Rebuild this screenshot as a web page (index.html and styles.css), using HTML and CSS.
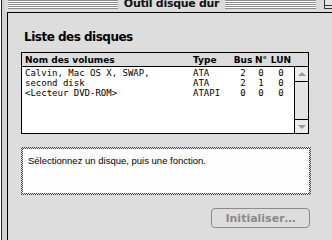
FILE: index.html
```html
<!DOCTYPE html>
<html lang="fr">
  <head>
    <meta charset="UTF-8" />
    <title>Outil disque dur</title>
    <link rel="stylesheet" href="styles.css">
  </head>
  <body>
    <div class="window">
      <div class="titlebar">
        <span class="stripes"></span>
        <span class="title">Outil disque dur</span>
        <span class="title-right">
          <span class="stripes"></span>
          <span class="shade-box"></span>
        </span>
      </div>
      <div class="content">
        <h1>Liste des disques</h1>

        <div class="listbox">
          <div class="list-head">
            <span class="col-name">Nom des volumes</span>
            <span class="col-type">Type</span>
            <span class="col-num">Bus</span>
            <span class="col-num">N°</span>
            <span class="col-num">LUN</span>
          </div>
          <div class="list-body">
            <ul class="rows">
              <li class="row">
                <span class="col-name">Calvin, Mac OS X, SWAP,</span>
                <span class="col-type">ATA</span>
                <span class="col-num">2</span>
                <span class="col-num">0</span>
                <span class="col-num">0</span>
              </li>
              <li class="row">
                <span class="col-name">second disk</span>
                <span class="col-type">ATA</span>
                <span class="col-num">2</span>
                <span class="col-num">1</span>
                <span class="col-num">0</span>
              </li>
              <li class="row">
                <span class="col-name">&lt;Lecteur DVD-ROM&gt;</span>
                <span class="col-type">ATAPI</span>
                <span class="col-num">0</span>
                <span class="col-num">0</span>
                <span class="col-num">0</span>
              </li>
            </ul>
            <div class="scrollbar">
              <div class="arrow-box up"><span class="arrow"></span></div>
              <div class="track"></div>
              <div class="arrow-box down"><span class="arrow"></span></div>
            </div>
          </div>
        </div>

        <div class="info">
          <div class="info-inner">Sélectionnez un disque, puis une fonction.</div>
        </div>

        <div class="actions">
          <button class="btn" disabled>Initialiser…</button>
        </div>
      </div>
    </div>
  </body>
</html>
```

FILE: styles.css
```css
html,
body {
  margin: 0;
  padding: 0;
  background: #ffffff;
  overflow: hidden;
}

body {
  font-family: "DejaVu Sans", sans-serif;
  color: #000;
}

.window {
  width: 328px;
  height: 249px;
  margin: -10px 0 0 1px;
  border: 1px solid #222;
  border-bottom: none;
  background: #d2d2d2;
  padding: 0 6px 0 5px;
}

/* title bar */
.titlebar {
  display: grid;
  grid-template-columns: 1fr auto 1fr;
  align-items: end;
  height: 21px;
  margin: 0 -6px 0 -2px;
  padding: 0 6px 3px 3px;
  box-sizing: border-box;
  background: #dcdcdc;
}

.stripes {
  display: block;
  height: 12px;
  background: repeating-linear-gradient(
    to bottom,
    #ffffff 0 1px,
    #8c8c8c 1px 2px
  );
}

.title {
  margin: 0 6px -2px;
  font-size: 11px;
  font-weight: bold;
  line-height: 14px;
  letter-spacing: -0.3px;
  color: #111;
}

.title-right {
  display: flex;
  align-items: flex-end;
}

.title-right .stripes {
  flex: 1;
}

.shade-box {
  width: 9px;
  height: 9px;
  margin: 0 0 0 8px;
  border: 1px solid #333;
  background:
    linear-gradient(#333, #333) 0 6px / 100% 1px no-repeat,
    #e4e4e4;
}

/* content area */
.content {
  box-sizing: border-box;
  height: 228px;
  border: 1px solid #000;
  border-bottom: none;
  background: #dddddd;
  padding: 17px 0 0 13px;
}

h1 {
  margin: 0 0 8px 3px;
  font-size: 12px;
  line-height: 14px;
  letter-spacing: -0.5px;
  font-weight: bold;
  color: #000;
}

/* volume list */
.listbox {
  width: 286px;
  border: 1px solid #000;
  background: #fff;
}

.list-head {
  display: grid;
  grid-template-columns: 171px 39px 22px 14px 26px;
  height: 12px;
  padding-top: 1px;
  border-bottom: 1px solid #000;
  background: #dcdcdc;
  font-size: 9px;
  font-weight: bold;
  line-height: 12px;
}

.list-body {
  display: flex;
  height: 66px;
}

.rows {
  flex: 1;
  margin: 0;
  padding: 1px 0 0;
  list-style: none;
  font-family: "DejaVu Sans Mono", monospace;
  font-size: 9px;
  line-height: 10px;
}

.row {
  display: grid;
  grid-template-columns: 171px 39px 22px 14px 26px;
}

.col-name {
  padding-left: 3px;
  white-space: nowrap;
}

.col-num {
  text-align: center;
}

.scrollbar {
  display: flex;
  flex-direction: column;
  width: 13px;
  border-left: 1px solid #000;
  background: #e2e2e2;
}

.arrow-box {
  height: 14px;
  display: flex;
  align-items: center;
  justify-content: center;
  background: #ececec;
}

.arrow-box.up {
  border-bottom: 1px solid #000;
}

.arrow-box.down {
  height: 13px;
  border-top: 1px solid #000;
}

.track {
  flex: 1;
  background: #e4e4e4;
}

.arrow {
  width: 0;
  height: 0;
  border-left: 4px solid transparent;
  border-right: 4px solid transparent;
}

.up .arrow {
  border-bottom: 4px solid #9a9a9a;
}

.down .arrow {
  border-top: 4px solid #9a9a9a;
}

/* help text box */
.info {
  width: 290px;
  height: 48px;
  margin-top: 13px;
  padding: 2px;
  box-sizing: border-box;
  background: conic-gradient(#444 25%, #dddddd 0 50%, #444 0 75%, #dddddd 0) 0 0 / 2px 2px;
}

.info-inner {
  height: 100%;
  background: #fdfdfd;
  padding: 6px 0 0 5px;
  box-sizing: border-box;
  font-family: "Liberation Sans", sans-serif;
  font-size: 9.5px;
  line-height: 11px;
}

/* button */
.actions {
  margin-top: 13px;
  padding-left: 190px;
}

.btn {
  display: block;
  width: 99px;
  height: 20px;
  padding: 0;
  border: 1px solid #8a8a8a;
  border-radius: 4px;
  background: #dddddd;
  font-family: "DejaVu Sans", sans-serif;
  font-size: 11px;
  font-weight: bold;
  color: #8a8a8a;
}
```
